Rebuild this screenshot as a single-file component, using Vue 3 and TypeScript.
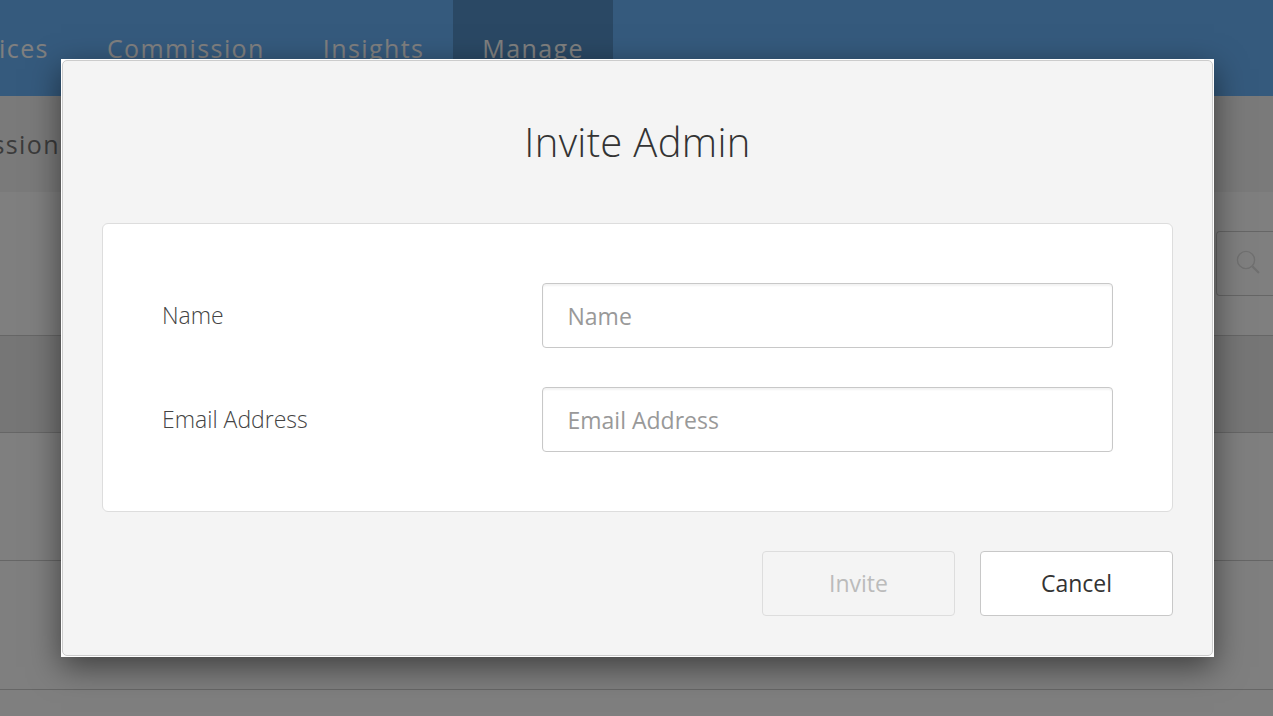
<script setup lang="ts">
import { ref } from 'vue'

const navItems = ['Services', 'Commission', 'Insights', 'Manage']
const activeNav = 'Manage'
const rows = [1, 2, 3]

const name = ref('')
const email = ref('')
</script>

<template>
	<div class="page">
		<header class="topbar">
			<nav class="nav">
				<a
					v-for="item in navItems"
					:key="item"
					class="nav-item"
					:class="{ active: item === activeNav }"
				>{{ item }}</a>
			</nav>
		</header>

		<div class="subbar">
			<span class="subbar-item">Commission</span>
		</div>

		<div class="toolbar">
			<div class="search">
				<svg class="search-icon" viewBox="0 0 24 24" fill="none" stroke="#e0e0e0">
					<circle cx="10" cy="10" r="8.6" stroke-width="1.4" />
					<path d="M16.4 16.4 L23 23" stroke-width="2.2" />
				</svg>
			</div>
		</div>

		<div class="table">
			<div class="table-head"></div>
			<div v-for="row in rows" :key="row" class="table-row"></div>
		</div>

		<div class="overlay">
			<div class="modal">
				<div class="modal-inner">
					<h2 class="modal-title">Invite Admin</h2>

					<form class="form-card" @submit.prevent>
						<label class="field">
							<span class="field-label">Name</span>
							<input v-model="name" class="field-input" type="text" placeholder="Name" />
						</label>
						<label class="field">
							<span class="field-label">Email Address</span>
							<input v-model="email" class="field-input" type="text" placeholder="Email Address" />
						</label>
					</form>

					<div class="actions">
						<button class="btn" type="button" disabled>Invite</button>
						<button class="btn" type="button">Cancel</button>
					</div>
				</div>
			</div>
		</div>
	</div>
</template>

<style>
html,
body {
	margin: 0;
	overflow: hidden;
}
</style>

<style scoped>
.page {
	position: relative;
	height: 100vh;
	overflow: hidden;
	background: #fff;
	font-family: "Open Sans", "Liberation Sans", sans-serif;
	color: #333;
}

.topbar {
	height: 96px;
	background: #6ab4fa;
}

.nav {
	display: flex;
	height: 96px;
	margin-left: -86px;
}

.nav-item {
	display: block;
	padding: 31px 29px 0;
	font-size: 25px;
	line-height: 34px;
	letter-spacing: 1.4px;
	color: #fff;
}

.nav-item.active {
	background: #5491c8;
}

.subbar {
	display: flex;
	height: 96px;
	align-items: center;
	margin-left: -98px;
	background: #f4f4f4;
}

.subbar-item {
	font-size: 25px;
	letter-spacing: 1.4px;
	color: #777;
}

.toolbar {
	display: flex;
	justify-content: flex-end;
	align-items: flex-start;
	box-sizing: border-box;
	height: 144px;
	padding-top: 39px;
	border-bottom: 1px solid #ccc;
}

.search {
	box-sizing: border-box;
	display: flex;
	align-items: center;
	width: 57px;
	height: 65px;
	padding: 0 0 4px 19px;
	border: 1px solid #ccc;
	border-right: none;
	border-radius: 4px 0 0 4px;
}

.search-icon {
	width: 24px;
	height: 24px;
}

.table-head {
	box-sizing: border-box;
	height: 97px;
	background: #ececec;
	border-bottom: 1px solid #ccc;
}

.table-row {
	box-sizing: border-box;
	height: 129px;
	border-bottom: 1px solid #ccc;
}

.table-head + .table-row {
	height: 128px;
}

.overlay {
	position: absolute;
	inset: 0;
	display: flex;
	justify-content: center;
	align-items: flex-start;
	padding: 59px 0 0 2px;
	background: rgba(0, 0, 0, 0.5);
}

.modal {
	box-sizing: border-box;
	width: 1153px;
	height: 598px;
	padding: 1px;
	background: #fff;
	box-shadow: 0 10px 30px rgba(0, 0, 0, 0.5);
}

.modal-inner {
	box-sizing: border-box;
	height: 100%;
	padding: 0 39px;
	background: #f4f4f4;
	border: 1px solid #ccc;
	border-radius: 5px;
}

.modal-title {
	margin: 0;
	padding-top: 55px;
	font-size: 40px;
	font-weight: 300;
	line-height: 52px;
	letter-spacing: 0.3px;
	text-align: center;
	color: #333;
}

.form-card {
	box-sizing: border-box;
	display: flex;
	flex-direction: column;
	gap: 39px;
	height: 289px;
	margin-top: 55px;
	padding: 59px 59px 0;
	background: #fff;
	border: 1px solid #ddd;
	border-radius: 6px;
}

.field {
	display: flex;
	align-items: center;
}

.field-label {
	width: 380px;
	flex: none;
	padding-bottom: 1px;
	font-size: 23px;
	font-weight: 300;
	color: #444;
}

.field-input {
	box-sizing: border-box;
	flex: 1;
	min-width: 0;
	height: 65px;
	padding: 0 24px 0 25px;
	background: #fff;
	border: 1px solid #c8c8c8;
	border-radius: 4px;
	box-shadow: inset 0 2px 2px rgba(0, 0, 0, 0.05);
	font-family: inherit;
	font-size: 23px;
	text-indent: -0.5px;
	color: #333;
	outline: none;
}

.field-input::placeholder {
	color: #999;
	opacity: 1;
}

.actions {
	display: flex;
	justify-content: flex-end;
	gap: 25px;
	margin-top: 39px;
}

.btn {
	box-sizing: border-box;
	width: 193px;
	height: 65px;
	padding-bottom: 2px;
	background: #fff;
	border: 1px solid #c8c8c8;
	border-radius: 4px;
	font-family: inherit;
	font-size: 23px;
	color: #333;
}

.btn:disabled {
	background: #f4f4f4;
	border-color: #ddd;
	color: #bbb;
}
</style>
